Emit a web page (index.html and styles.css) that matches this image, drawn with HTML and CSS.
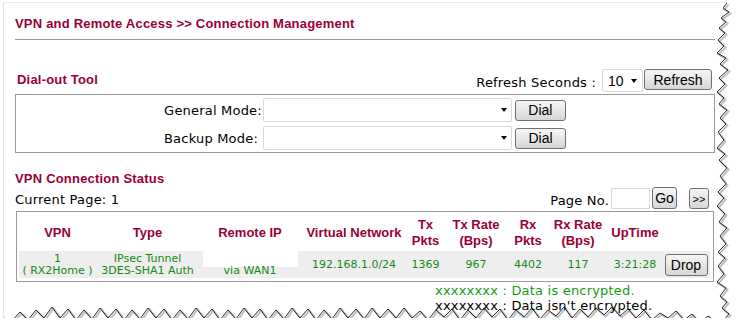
FILE: index.html
```html
<!DOCTYPE html>
<html lang="en">
<head>
    <meta charset="UTF-8">
    <meta name="viewport" content="width=device-width, initial-scale=1.0">
    <title>Connection Management</title>
    <link rel="stylesheet" href="styles.css">
</head>
<body>
    <div class="paper">
        <svg class="torn" width="741" height="333" viewBox="0 0 741 333">
            <polyline class="edge-shadow" points="727,3 723,8 729,12 721,18 726,22 719,28 725,33 718,40 724,46 717,53 726,58 720,64 728,70 719,78 725,84 717,92 724,98 719,104 727,110 720,118 726,124 718,132 724,140 717,148 725,154 719,160 727,168 720,176 726,184 718,192 724,198 717,206 725,214 719,222 727,228 720,236 726,244 718,252 725,258 718,266 724,274 717,282 726,288 720,296 727,302 722,308 729,314 724,320 716,322 708,316 700,323 692,314 684,320 676,311 668,318 660,313 652,320 644,310 636,318 628,309 620,316 612,307 604,315 596,308 588,317 580,309 572,318 564,307 556,316 548,310 540,319 532,308 524,317 516,310 508,320 500,309 492,317 484,308 476,318 468,310 460,320 452,309 444,317 436,310 428,320 420,311 412,318 404,308 396,318 388,309 380,318 372,308 364,319 356,309 348,318 340,308 332,319 324,310 316,320 308,309 300,318 292,308 284,319 276,310 268,320 260,309 252,318 244,308 236,319 228,310 220,320 212,309 204,318 196,308 188,319 180,310 172,320 164,309 156,318 148,308 140,319 132,310 124,320 116,309 108,318 100,308 92,319 84,310 76,320 68,309 60,318 52,307 44,318 36,310 28,320 20,312 12,321 4,318"/>
            <polyline class="edge-line" points="727,3 723,8 729,12 721,18 726,22 719,28 725,33 718,40 724,46 717,53 726,58 720,64 728,70 719,78 725,84 717,92 724,98 719,104 727,110 720,118 726,124 718,132 724,140 717,148 725,154 719,160 727,168 720,176 726,184 718,192 724,198 717,206 725,214 719,222 727,228 720,236 726,244 718,252 725,258 718,266 724,274 717,282 726,288 720,296 727,302 722,308 729,314 724,320 716,322 708,316 700,323 692,314 684,320 676,311 668,318 660,313 652,320 644,310 636,318 628,309 620,316 612,307 604,315 596,308 588,317 580,309 572,318 564,307 556,316 548,310 540,319 532,308 524,317 516,310 508,320 500,309 492,317 484,308 476,318 468,310 460,320 452,309 444,317 436,310 428,320 420,311 412,318 404,308 396,318 388,309 380,318 372,308 364,319 356,309 348,318 340,308 332,319 324,310 316,320 308,309 300,318 292,308 284,319 276,310 268,320 260,309 252,318 244,308 236,319 228,310 220,320 212,309 204,318 196,308 188,319 180,310 172,320 164,309 156,318 148,308 140,319 132,310 124,320 116,309 108,318 100,308 92,319 84,310 76,320 68,309 60,318 52,307 44,318 36,310 28,320 20,312 12,321 4,318"/>
        </svg>

        <div class="page">
            <h1 class="title">VPN and Remote Access &gt;&gt; Connection Management</h1>
            <hr class="rule">

            <div class="tool-head">
                <h2 class="section">Dial-out Tool</h2>
                <div class="refresh">
                    <span class="refresh-label">Refresh Seconds :</span>
                    <span class="select small"><span class="value">10</span></span>
                    <button class="btn refresh-btn">Refresh</button>
                </div>
            </div>

            <div class="dial-box">
                <div class="dial-row">
                    <label>General Mode:</label>
                    <span class="select wide"></span>
                    <button class="btn dial">Dial</button>
                </div>
                <div class="dial-row">
                    <label>Backup Mode:</label>
                    <span class="select wide backup"></span>
                    <button class="btn dial">Dial</button>
                </div>
            </div>

            <h2 class="section status">VPN Connection Status</h2>
            <div class="pager">
                <span class="current">Current Page: 1</span>
                <div class="page-no">
                    <span class="page-no-label">Page No.</span>
                    <span class="input"></span>
                    <button class="btn go">Go</button>
                    <button class="btn next">&gt;&gt;</button>
                </div>
            </div>

            <div class="table-box">
                <table class="vpn-table">
                    <colgroup>
                        <col style="width:77px">
                        <col style="width:103px">
                        <col style="width:102px">
                        <col style="width:106px">
                        <col style="width:37px">
                        <col style="width:64px">
                        <col style="width:40px">
                        <col style="width:60px">
                        <col style="width:54px">
                        <col style="width:48px">
                    </colgroup>
                    <tr>
                        <th>VPN</th>
                        <th>Type</th>
                        <th>Remote IP</th>
                        <th>Virtual Network</th>
                        <th>Tx<br>Pkts</th>
                        <th>Tx Rate<br>(Bps)</th>
                        <th>Rx<br>Pkts</th>
                        <th>Rx Rate<br>(Bps)</th>
                        <th>UpTime</th>
                        <th></th>
                    </tr>
                    <tr>
                        <td>1<br>( RX2Home )</td>
                        <td>IPsec Tunnel<br>3DES-SHA1 Auth</td>
                        <td class="remote"><span class="masked"></span><span class="via">via WAN1</span></td>
                        <td>192.168.1.0/24</td>
                        <td>1369</td>
                        <td>967</td>
                        <td>4402</td>
                        <td>117</td>
                        <td>3:21:28</td>
                        <td><button class="btn drop">Drop</button></td>
                    </tr>
                </table>
            </div>

            <div class="legend">
                <div class="enc">xxxxxxxx : Data is encrypted.</div>
                <div class="plain">xxxxxxxx : Data isn't encrypted.</div>
            </div>
        </div>
    </div>
</body>
</html>
```

FILE: styles.css
```css
body {
    margin: 0;
    background-color: #ffffff;
    font-family: "DejaVu Sans", Verdana, sans-serif;
    font-size: 13px;
    letter-spacing: 0.2px;
    color: #000000;
}
.paper {
    position: relative;
    margin: 2px 0 0 3px;
    width: 722px;
    height: 315px;
    border-top: 1px solid #ececec;
    border-left: 1px solid #e2e2e2;
}
.torn {
    position: absolute;
    left: -4px;
    top: -3px;
    z-index: 0;
}
.edge-shadow {
    fill: none;
    stroke: #8a8a8a;
    stroke-width: 2;
    opacity: 0.55;
    transform: translate(1.5px, 1.5px);
}
.edge-line {
    fill: none;
    stroke: #2a2a2a;
    stroke-width: 1;
}
.page {
    position: relative;
    z-index: 1;
    width: 700px;
    padding: 13px 0 0 11px;
}
.title {
    margin: 0;
    font: bold 13px/15px "Liberation Sans", Arial, sans-serif;
    letter-spacing: 0.2px;
    color: #990033;
}
.rule {
    margin: 8px 0 0;
    height: 0;
    border: 0;
    border-top: 1px solid #9a9a9a;
}
.section {
    margin: 0;
    font: bold 13px/15px "Liberation Sans", Arial, sans-serif;
    letter-spacing: 0.2px;
    color: #990033;
}
.tool-head {
    display: flex;
    justify-content: space-between;
    align-items: flex-end;
    margin-top: 29px;
    padding-right: 3px;
}
.tool-head .section {
    margin: 0 0 5px 2px;
}
.refresh {
    display: flex;
    align-items: flex-start;
}
.refresh-label {
    margin: 6px 6px 0 0;
    line-height: 15px;
}
.select {
    display: flex;
    justify-content: space-between;
    align-items: center;
    box-sizing: border-box;
    padding: 0 4px 0 5px;
    background-color: #ffffff;
    border: 1px solid #dadada;
    border-radius: 2px;
}
.select::after {
    content: "";
    margin-left: auto;
    border-left: 3.5px solid transparent;
    border-right: 3.5px solid transparent;
    border-top: 4px solid #000000;
}
.select.small {
    width: 41px;
    height: 23px;
    padding-right: 5px;
}
.select .value {
    font: 14px "Liberation Sans", Arial, sans-serif;
    letter-spacing: 0;
}
.select.wide {
    width: 249px;
    height: 24px;
    padding-right: 4px;
}
.btn {
    box-sizing: border-box;
    padding: 0;
    font: 14px "Liberation Sans", Arial, sans-serif;
    letter-spacing: 0;
    color: #000000;
    background: linear-gradient(#f6f6f6, #e6e6e6 50%, #d6d6d6);
    border: 1px solid #707070;
    border-radius: 3px;
}
.refresh-btn {
    width: 68px;
    height: 21px;
    margin-left: 1px;
}
.dial-box {
    display: flex;
    flex-direction: column;
    gap: 4px;
    margin-top: 2px;
    padding: 3px 0 2px;
    border: 1px solid #9a9a9a;
}
.dial-row {
    display: flex;
    justify-content: center;
    align-items: center;
}
.dial-row label {
    margin-right: 1px;
}
.dial-row .backup {
    margin-left: 4px;
}
.btn.dial {
    width: 51px;
    height: 21px;
    margin-left: 3px;
}
.section.status {
    margin-top: 18px;
}
.pager {
    display: flex;
    justify-content: space-between;
    align-items: flex-end;
    margin-top: 1px;
    padding-right: 6px;
}
.current {
    margin-bottom: 2px;
    line-height: 15px;
}
.page-no {
    display: flex;
    align-items: flex-start;
}
.page-no-label {
    margin-top: 6px;
    line-height: 15px;
}
.input {
    box-sizing: border-box;
    width: 39px;
    height: 21px;
    margin: 1px 2px 0;
    background-color: #ffffff;
    border: 1px solid #dadada;
}
.btn.go {
    width: 25px;
    height: 22px;
}
.btn.next {
    width: 20px;
    height: 21px;
    margin: 1px 0 0 12px;
    font-size: 11px;
}
.table-box {
    margin: 2px 1px 0;
    padding: 2px 3px 3px 2px;
    border: 1px solid #9a9a9a;
}
.vpn-table {
    width: 691px;
    border-collapse: collapse;
    table-layout: fixed;
}
.vpn-table th {
    height: 37px;
    padding: 0;
    font: bold 13px/16px "Liberation Sans", Arial, sans-serif;
    letter-spacing: 0;
    color: #990033;
    text-align: center;
    vertical-align: middle;
}
.vpn-table td {
    height: 27px;
    padding: 0;
    font-size: 11px;
    line-height: 12px;
    letter-spacing: 0;
    color: #138a13;
    text-align: center;
    vertical-align: middle;
    background-color: #eeeeee;
    white-space: nowrap;
}
.vpn-table td.remote {
    vertical-align: top;
}
.masked {
    display: block;
    width: 95px;
    height: 16px;
    margin: 0 auto;
    background-color: #ffffff;
}
.via {
    display: block;
    margin-top: -2px;
}
.btn.drop {
    width: 43px;
    height: 22px;
}
.legend {
    margin-top: 1px;
    padding-left: 420px;
    line-height: 15px;
}
.legend .enc {
    color: #169c16;
}
.legend .plain {
    color: #000000;
}
```
